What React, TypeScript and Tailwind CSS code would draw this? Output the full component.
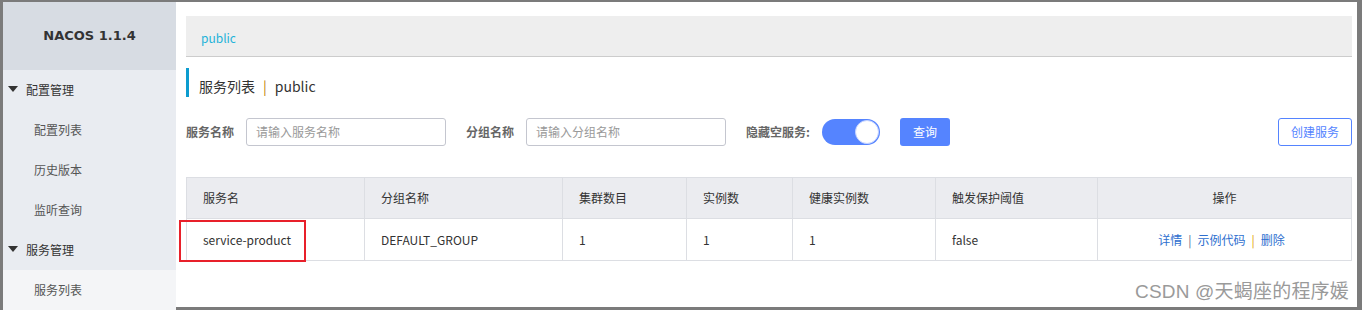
import React from 'react';

const FONT = { fontFamily: '"Noto Sans CJK SC", "Liberation Sans", sans-serif' };

const sideItems = [
  { label: '配置管理', group: true },
  { label: '配置列表' },
  { label: '历史版本' },
  { label: '监听查询' },
  { label: '服务管理', group: true },
  { label: '服务列表', active: true },
];

const columns = [
  { title: '服务名', w: 'w-[178px]' },
  { title: '分组名称', w: 'w-[198px]' },
  { title: '集群数目', w: 'w-[124px]' },
  { title: '实例数', w: 'w-[106px]' },
  { title: '健康实例数', w: 'w-[143px]' },
  { title: '触发保护阈值', w: 'w-[162px]' },
  { title: '操作', w: 'flex-1', center: true },
];

const row = ['service-product', 'DEFAULT_GROUP', '1', '1', '1', 'false'];

function Sidebar() {
  return (
    <div className="w-[173px] shrink-0 bg-[#e9ecf1] flex flex-col">
      <div className="h-[68px] shrink-0 bg-[#d7dce3] flex items-center justify-center">
        <span className="text-[13px] font-bold text-[#333]" style={{ fontFamily: '"DejaVu Sans", sans-serif' }}>
          NACOS 1.1.4
        </span>
      </div>
      {sideItems.map((it) => (
        <div
          key={it.label}
          className={`h-10 shrink-0 flex items-center text-[12px] ${it.active ? 'bg-[#f4f5f7]' : ''} ${
            it.group ? 'pl-[4px] text-[#333]' : 'pl-[31px] text-[#555]'
          }`}
        >
          {it.group && (
            <svg width="12" height="8" viewBox="0 0 12 8" className="mr-[7px] mb-[2px]">
              <path d="M1 1h10L6 7z" fill="#333" />
            </svg>
          )}
          {it.label}
        </div>
      ))}
    </div>
  );
}

function Toolbar() {
  return (
    <div className="mt-[21px] flex items-center h-7 text-[12px]">
      <span className="font-bold text-[#666] w-[60px]">服务名称</span>
      <div className="w-[200px] h-7 border border-[#c4c6cf] rounded-[3px] flex items-center px-[9px] text-[#999]">
        请输入服务名称
      </div>
      <span className="font-bold text-[#666] ml-[20px] w-[60px]">分组名称</span>
      <div className="w-[200px] h-7 border border-[#c4c6cf] rounded-[3px] flex items-center px-[9px] text-[#999]">
        请输入分组名称
      </div>
      <span className="font-bold text-[#666] ml-[20px] w-[76px]">隐藏空服务:</span>
      <div className="w-[58px] h-[26px] rounded-full bg-[#5584ff] flex items-center justify-end pr-px">
        <div className="w-6 h-6 rounded-full bg-white border border-[#c4d3ff]" />
      </div>
      <button className="ml-[20px] w-[50px] h-7 rounded-[3px] bg-[#5584ff] text-white text-[12px]">查询</button>
      <button className="ml-auto w-[74px] h-7 rounded-[3px] border border-[#5584ff] text-[#5584ff] text-[12px] bg-white">
        创建服务
      </button>
    </div>
  );
}

function ServiceTable() {
  return (
    <div className="relative mt-[31px] border border-[#dcdee3] text-[12px] text-[#333]">
      <div className="flex h-[41px] bg-[#ebecf0] border-b border-[#dcdee3]">
        {columns.map((c, i) => (
          <div
            key={c.title}
            className={`${c.w} flex items-center px-4 ${i < columns.length - 1 ? 'border-r border-[#dcdee3]' : ''} ${
              c.center ? 'justify-center' : ''
            }`}
          >
            {c.title}
          </div>
        ))}
      </div>
      <div className="flex h-[41px] bg-white">
        {row.map((v, i) => (
          <div key={i} className={`${columns[i].w} flex items-center px-4 border-r border-[#dcdee3]`}>
            {v}
          </div>
        ))}
        <div className="flex-1 flex items-center justify-center pr-[6px] text-[#2e6fcf]">
          <span>详情</span>
          <span className="mx-[6px] text-[#5a6a8a]">|</span>
          <span>示例代码</span>
          <span className="mx-[6px] text-[#e0a000]">|</span>
          <span>删除</span>
        </div>
      </div>
      <div className="absolute left-[-8px] top-[42px] w-[127px] h-[42px] border-2 border-[#e8202a]" />
    </div>
  );
}

export default function App() {
  return (
    <div className="w-[1362px] h-[310px] bg-white overflow-hidden" style={FONT}>
      <div className="relative h-full border-t-2 border-l-[3px] border-r-[5px] border-b-[3px] border-[#7b7b7b] flex">
        <Sidebar />
        <div className="flex-1 pl-[10px] pr-[5px] flex flex-col">
          <div className="mt-[14px] h-[41px] bg-[#eeeeee] border-b border-[#cccccc] flex items-center pl-[15px] pt-[4px] text-[12px] text-[#1fb3d9]">
            public
          </div>
          <div className="mt-[11px] h-[29px] border-l-[3px] border-[#0c9ccf] flex items-center pl-[10px] pt-[8px] text-[14px] text-[#333]">
            服务列表<span className="mx-[8px] text-[#c08000]">|</span>public
          </div>
          <Toolbar />
          <ServiceTable />
        </div>
        <div
          className="absolute right-[8px] bottom-[1px] text-[19px] text-[#9a9a9a] tracking-[0.2px]"
          style={{ fontFamily: '"Liberation Sans", "Noto Sans CJK SC", sans-serif' }}
        >
          CSDN @天蝎座的程序媛
        </div>
      </div>
    </div>
  );
}
